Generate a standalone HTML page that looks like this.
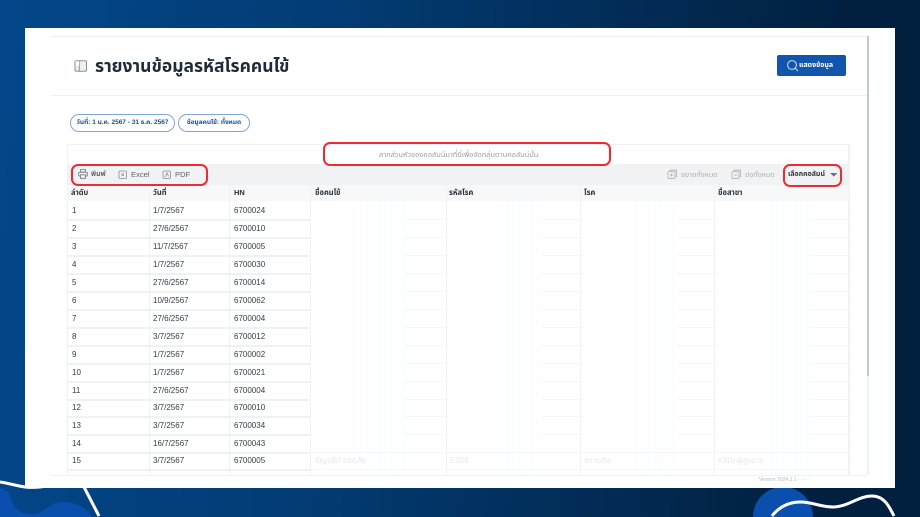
<!DOCTYPE html>
<html lang="th">
<head>
<meta charset="utf-8">
<title>รายงานข้อมูลรหัสโรคคนไข้</title>
<style>
*{box-sizing:border-box}
html,body{margin:0;padding:0;width:920px;height:517px;overflow:hidden}
body{position:relative;background:linear-gradient(95deg,#03478a 0%,#033c74 35%,#012040 88%,#012040 100%);font-family:"Liberation Sans","Noto Sans Thai","Noto Sans CJK SC",sans-serif;color:#3f4650}
.a{position:absolute;white-space:nowrap}
#panel{left:25px;top:28px;width:870px;height:460px;background:#fff;position:absolute;overflow:hidden;filter:blur(.3px)}
#inner{position:absolute;left:26px;top:8px;width:817px;height:439px;border-top:1px solid #eceef1;overflow:hidden}
#deco{position:absolute;left:0;top:0;overflow:hidden}
.line{position:absolute;background:#eff1f4}
.r{position:absolute;left:43px;width:243px;height:1.5px;background:#eff1f4}
.s{position:absolute;height:1px;background:#f5f6f8}
.g{position:absolute;top:174px;height:273px;background:repeating-linear-gradient(90deg,#fcfdfe 0 3px,#fff 3px 6px)}
.t{position:absolute;font-size:8px;line-height:10px;color:#363b43;white-space:nowrap}
.h{position:absolute;font-size:7.5px;line-height:10px;font-weight:bold;color:#2a313b;white-space:nowrap}
.red{position:absolute;border:2px solid #ee2b35;border-radius:7px;filter:blur(.2px)}
.pill{position:absolute;border:1px solid #7fa6dc;border-radius:9px;height:18px;font-size:6.5px;font-weight:bold;color:#174f9e;line-height:16.5px;text-align:center;white-space:nowrap}
.tb{position:absolute;font-size:7.6px;line-height:10px;color:#5d636c;white-space:nowrap}
#panel svg{position:absolute;overflow:visible}
</style>
</head>
<body>
<svg id="deco" width="920" height="517" viewBox="0 0 920 517" fill="none">
  <path d="M0 488C5 489 9 492 11 499C14 510 23 515 33 514C45 513 50 502 63 502C76 502 87 508 92 517L0 517Z" fill="#0a4fae"/>
  <path d="M0 482C8 483 17 486 25 487C33 488 40 487 47 486" stroke="#fff" stroke-width="3"/>
  <path d="M84 487L99 516" stroke="#fff" stroke-width="3"/>
  <path d="M753 517A30 30 0 0 1 813 517Z" fill="#0a4fae"/>
  <path d="M772 516C778 508 788 502 800 502C813 502 820 507 833 507C848 507 858 496 872 496C884 496 889 506 894 516" stroke="#fff" stroke-width="3"/>
</svg>
<div id="panel">
  <div id="inner"></div>
  <div class="line" style="left:842px;top:8px;width:1.5px;height:340px;background:#c4c8ce"></div>
  <div class="line" style="left:842px;top:348px;width:1.5px;height:99px;background:#eef1f6"></div>
  <div class="line" style="left:26px;top:67px;width:816px;height:1px"></div>
  <div class="line" style="left:26px;top:447px;width:816px;height:1px"></div>

  <svg style="left:49px;top:31px" width="14" height="14" viewBox="0 0 14 14" fill="none"><rect x="1" y="1.8" width="11.5" height="10.5" rx="1.5" stroke="#8a9098" stroke-width="1" fill="#eef0f2"/><path d="M5.2 2V12" stroke="#8a9098"/><rect x="1.5" y="2.2" width="3.6" height="4.5" fill="#fff"/></svg>
  <div class="a" style="left:70px;top:27px;font-size:17.5px;line-height:23px;font-weight:bold;color:#1f2a3a">รายงานข้อมูลรหัสโรคคนไข้</div>

  <div style="position:absolute;left:752px;top:27px;width:69px;height:21px;background:#1255ad;border-radius:2px"></div>
  <svg style="left:761px;top:31px" width="13" height="13" viewBox="0 0 13 13" fill="none"><circle cx="6" cy="6" r="4.4" stroke="#d5e2f5" stroke-width="1"/><path d="M9.3 9.3L12 12" stroke="#d5e2f5"/></svg>
  <div class="a" style="left:774px;top:33px;font-size:7px;line-height:10px;font-weight:bold;color:#fff">แสดงข้อมูล</div>

  <div class="pill" style="left:45px;top:86px;width:105px">วันที่: 1 ม.ค. 2567 - 31 ธ.ค. 2567</div>
  <div class="pill" style="left:153px;top:86px;width:72px">ข้อมูลคนไข้: ทั้งหมด</div>

  <!-- table -->
  <div style="position:absolute;left:42px;top:116px;width:782px;height:331px;border:1px solid #eff1f3;border-bottom:0;overflow:hidden"></div>
  <div style="position:absolute;left:43px;top:136px;width:781px;height:21px;background:#f1f2f4"></div>
  <div style="position:absolute;left:43px;top:157px;width:781px;height:16px;background:#f7f8f9"></div>

  <div class="a" style="left:354px;top:122px;font-size:7.4px;line-height:10px;color:#9a9ea5">ลากส่วนหัวของคอลัมน์มาที่นี่เพื่อจัดกลุ่มตามคอลัมน์นั้น</div>

  <svg style="left:53px;top:141px" width="10" height="10" viewBox="0 0 10 10" fill="none" stroke="#7b8088" stroke-width=".9"><rect x="2.5" y=".6" width="5" height="2.6"/><rect x=".6" y="3.2" width="8.8" height="3.8" rx="1"/><rect x="2.5" y="5.8" width="5" height="3.6" fill="#f1f2f4"/></svg>
  <div class="tb" style="left:66px;top:142px;font-size:7px;font-weight:bold">พิมพ์</div>
  <svg style="left:93px;top:142px" width="10" height="10" viewBox="0 0 10 10" fill="none" stroke="#8a8f96" stroke-width=".8"><rect x="1" y="1" width="7.4" height="7.4" rx="1"/><path d="M3.4 3.4L6 6M6 3.4L3.4 6"/></svg>
  <div class="tb" style="left:106px;top:142px">Excel</div>
  <svg style="left:137px;top:142px" width="10" height="10" viewBox="0 0 10 10" fill="none" stroke="#8a8f96" stroke-width=".8"><rect x="1" y="1" width="7.4" height="7.4" rx="1"/><path d="M3 7L5 2.8L6.5 6.4"/></svg>
  <div class="tb" style="left:150px;top:142px">PDF</div>

  <svg style="left:642px;top:141px" width="11" height="11" viewBox="0 0 11 11" fill="none" stroke="#b4b8be" stroke-width=".9"><rect x="1" y="2.5" width="7" height="7" rx="1"/><path d="M3 2V1H9.5V7.5H8.5M4.5 4.5V7.5M3 6H6"/></svg>
  <div class="tb" style="left:656px;top:141.5px;font-size:7.2px;color:#adb1b7">ขยายทั้งหมด</div>
  <svg style="left:706px;top:141px" width="11" height="11" viewBox="0 0 11 11" fill="none" stroke="#b4b8be" stroke-width=".9"><rect x="1" y="2.5" width="7" height="7" rx="1"/><path d="M3 2V1H9.5V7.5H8.5M3 6H6"/></svg>
  <div class="tb" style="left:720px;top:141.5px;font-size:7.2px;color:#adb1b7">ย่อทั้งหมด</div>
  <div class="tb" style="left:763px;top:141.5px;font-size:7px;font-weight:bold;color:#2f353d">เลือกคอลัมน์</div>
  <svg style="left:805px;top:145px" width="8" height="4" viewBox="0 0 8 4"><path d="M0 0H7.5L3.75 3.6Z" fill="#6d7278"/></svg>

  <div class="h" style="left:46px;top:160px">ลำดับ</div>
  <div class="h" style="left:128px;top:160px">วันที่</div>
  <div class="h" style="left:209px;top:160px">HN</div>
  <div class="h" style="left:290px;top:160px">ชื่อคนไข้</div>
  <div class="h" style="left:424px;top:160px">รหัสโรค</div>
  <div class="h" style="left:559px;top:160px">โรค</div>
  <div class="h" style="left:693px;top:160px">ชื่อสาขา</div>

  <!-- vertical lines -->
  <div class="line" style="left:124px;top:157px;width:1px;height:290px"></div>
  <div class="line" style="left:204px;top:157px;width:1px;height:290px"></div>
  <div class="line" style="left:285px;top:157px;width:1px;height:290px"></div>
  <div class="line" style="left:421px;top:157px;width:1px;height:290px"></div>
  <div class="line" style="left:555px;top:157px;width:1px;height:290px"></div>
  <div class="line" style="left:689px;top:157px;width:1px;height:290px"></div>
  <div class="line" style="left:824px;top:116px;width:1px;height:331px"></div>

  <!-- ghost stripes -->
  <div class="g" style="left:335px;width:45px"></div>
  <div class="g" style="left:475px;width:43px"></div>
  <div class="g" style="left:610px;width:42px"></div>
  <div class="g" style="left:745px;width:40px"></div>

  <!-- horizontal lines, first three columns -->
  <div class="r" style="top:191px"></div><div class="r" style="top:209px"></div><div class="r" style="top:227px"></div>
  <div class="r" style="top:245px"></div><div class="r" style="top:263px"></div><div class="r" style="top:281px"></div>
  <div class="r" style="top:299px"></div><div class="r" style="top:317px"></div><div class="r" style="top:335px"></div>
  <div class="r" style="top:353px"></div><div class="r" style="top:371px"></div><div class="r" style="top:388px"></div>
  <div class="r" style="top:406px"></div><div class="r" style="top:424px"></div><div class="r" style="top:441px"></div>

  <!-- partial row lines in the blanked columns -->
  <div class="s" style="left:380px;width:43px;top:191px"></div><div class="s" style="left:518px;width:40px;top:191px"></div><div class="s" style="left:652px;width:40px;top:191px"></div><div class="s" style="left:785px;width:39px;top:191px"></div>
  <div class="s" style="left:380px;width:43px;top:209px"></div><div class="s" style="left:518px;width:40px;top:209px"></div><div class="s" style="left:652px;width:40px;top:209px"></div><div class="s" style="left:785px;width:39px;top:209px"></div>
  <div class="s" style="left:380px;width:43px;top:227px"></div><div class="s" style="left:518px;width:40px;top:227px"></div><div class="s" style="left:652px;width:40px;top:227px"></div><div class="s" style="left:785px;width:39px;top:227px"></div>
  <div class="s" style="left:380px;width:43px;top:245px"></div><div class="s" style="left:518px;width:40px;top:245px"></div><div class="s" style="left:652px;width:40px;top:245px"></div><div class="s" style="left:785px;width:39px;top:245px"></div>
  <div class="s" style="left:380px;width:43px;top:263px"></div><div class="s" style="left:518px;width:40px;top:263px"></div><div class="s" style="left:652px;width:40px;top:263px"></div><div class="s" style="left:785px;width:39px;top:263px"></div>
  <div class="s" style="left:380px;width:43px;top:281px"></div><div class="s" style="left:518px;width:40px;top:281px"></div><div class="s" style="left:652px;width:40px;top:281px"></div><div class="s" style="left:785px;width:39px;top:281px"></div>
  <div class="s" style="left:380px;width:43px;top:299px"></div><div class="s" style="left:518px;width:40px;top:299px"></div><div class="s" style="left:652px;width:40px;top:299px"></div><div class="s" style="left:785px;width:39px;top:299px"></div>
  <div class="s" style="left:380px;width:43px;top:317px"></div><div class="s" style="left:518px;width:40px;top:317px"></div><div class="s" style="left:652px;width:40px;top:317px"></div><div class="s" style="left:785px;width:39px;top:317px"></div>
  <div class="s" style="left:380px;width:43px;top:335px"></div><div class="s" style="left:518px;width:40px;top:335px"></div><div class="s" style="left:652px;width:40px;top:335px"></div><div class="s" style="left:785px;width:39px;top:335px"></div>
  <div class="s" style="left:380px;width:43px;top:353px"></div><div class="s" style="left:518px;width:40px;top:353px"></div><div class="s" style="left:652px;width:40px;top:353px"></div><div class="s" style="left:785px;width:39px;top:353px"></div>
  <div class="s" style="left:380px;width:43px;top:371px"></div><div class="s" style="left:518px;width:40px;top:371px"></div><div class="s" style="left:652px;width:40px;top:371px"></div><div class="s" style="left:785px;width:39px;top:371px"></div>
  <div class="s" style="left:380px;width:43px;top:388px"></div><div class="s" style="left:518px;width:40px;top:388px"></div><div class="s" style="left:652px;width:40px;top:388px"></div><div class="s" style="left:785px;width:39px;top:388px"></div>
  <div class="s" style="left:380px;width:43px;top:406px"></div><div class="s" style="left:518px;width:40px;top:406px"></div><div class="s" style="left:652px;width:40px;top:406px"></div><div class="s" style="left:785px;width:39px;top:406px"></div>
  <div class="s" style="left:286px;width:538px;top:424px"></div>
  <div class="s" style="left:286px;width:538px;top:441px"></div>

  <!-- rows -->
  <div class="t" style="left:47px;top:178px">1</div><div class="t" style="left:128px;top:178px">1/7/2567</div><div class="t" style="left:209px;top:178px">6700024</div>
  <div class="t" style="left:47px;top:196px">2</div><div class="t" style="left:128px;top:196px">27/6/2567</div><div class="t" style="left:209px;top:196px">6700010</div>
  <div class="t" style="left:47px;top:214px">3</div><div class="t" style="left:128px;top:214px">11/7/2567</div><div class="t" style="left:209px;top:214px">6700005</div>
  <div class="t" style="left:47px;top:232px">4</div><div class="t" style="left:128px;top:232px">1/7/2567</div><div class="t" style="left:209px;top:232px">6700030</div>
  <div class="t" style="left:47px;top:250px">5</div><div class="t" style="left:128px;top:250px">27/6/2567</div><div class="t" style="left:209px;top:250px">6700014</div>
  <div class="t" style="left:47px;top:268px">6</div><div class="t" style="left:128px;top:268px">10/9/2567</div><div class="t" style="left:209px;top:268px">6700062</div>
  <div class="t" style="left:47px;top:286px">7</div><div class="t" style="left:128px;top:286px">27/6/2567</div><div class="t" style="left:209px;top:286px">6700004</div>
  <div class="t" style="left:47px;top:304px">8</div><div class="t" style="left:128px;top:304px">3/7/2567</div><div class="t" style="left:209px;top:304px">6700012</div>
  <div class="t" style="left:47px;top:322px">9</div><div class="t" style="left:128px;top:322px">1/7/2567</div><div class="t" style="left:209px;top:322px">6700002</div>
  <div class="t" style="left:47px;top:340px">10</div><div class="t" style="left:128px;top:340px">1/7/2567</div><div class="t" style="left:209px;top:340px">6700021</div>
  <div class="t" style="left:47px;top:358px">11</div><div class="t" style="left:128px;top:358px">27/6/2567</div><div class="t" style="left:209px;top:358px">6700004</div>
  <div class="t" style="left:47px;top:375px">12</div><div class="t" style="left:128px;top:375px">3/7/2567</div><div class="t" style="left:209px;top:375px">6700010</div>
  <div class="t" style="left:47px;top:393px">13</div><div class="t" style="left:128px;top:393px">3/7/2567</div><div class="t" style="left:209px;top:393px">6700034</div>
  <div class="t" style="left:47px;top:411px">14</div><div class="t" style="left:128px;top:411px">16/7/2567</div><div class="t" style="left:209px;top:411px">6700043</div>
  <div class="t" style="left:47px;top:428px">15</div><div class="t" style="left:128px;top:428px">3/7/2567</div><div class="t" style="left:209px;top:428px">6700005</div>

  <div class="t" style="left:290px;top:428px;color:#e6e8eb">อัญชลีย์ ขอคลัง</div>
  <div class="t" style="left:425px;top:428px;color:#e6e8eb">E026</div>
  <div class="t" style="left:559px;top:428px;color:#e6e8eb">ความดัน</div>
  <div class="t" style="left:693px;top:428px;color:#e6e8eb">คลินิกผู้สูงอายุ</div>

  <div class="a" style="left:734px;top:449px;font-size:5px;line-height:7px;color:#b8bcc2">Version 2024.1.1 · ··· ·</div>
</div>
<!-- red annotations -->
<div class="red" style="left:323px;top:142px;width:288px;height:24px"></div>
<div class="red" style="left:71px;top:164px;width:137px;height:22px"></div>
<div class="red" style="left:783px;top:164px;width:59px;height:23px"></div>
</body>
</html>
